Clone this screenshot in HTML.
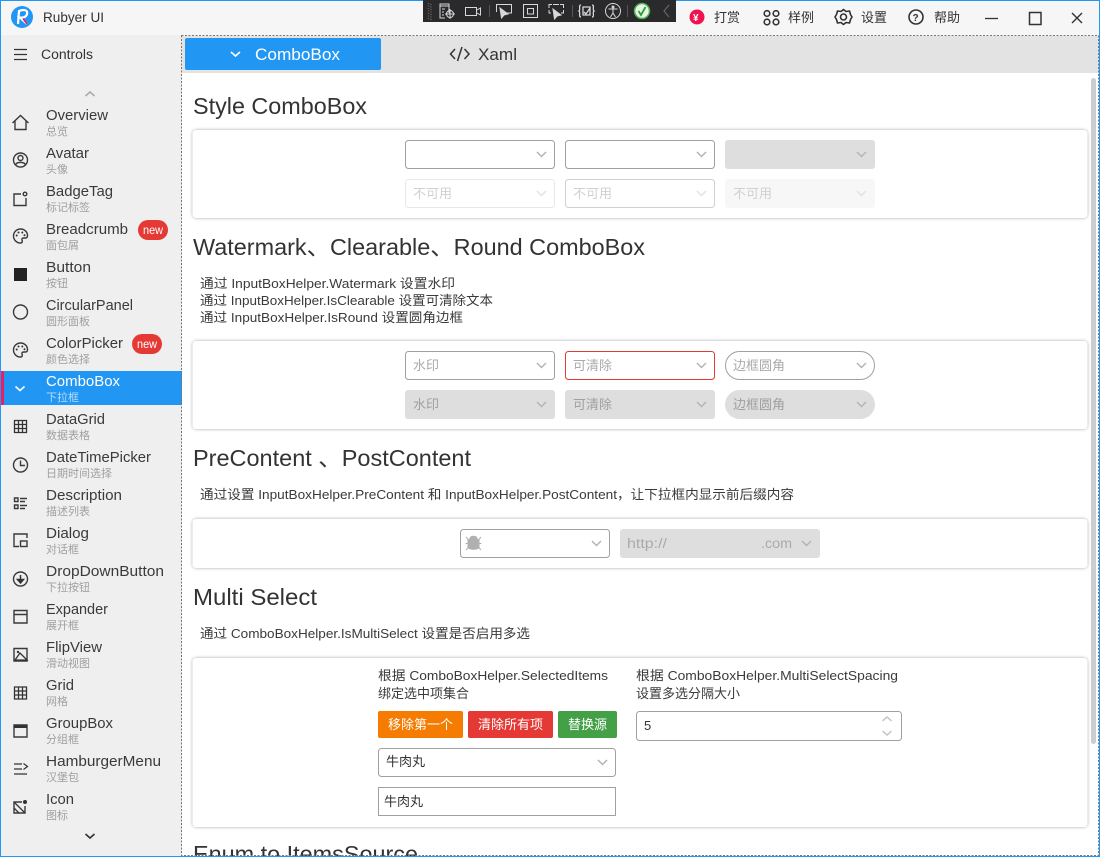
<!DOCTYPE html>
<html lang="zh">
<head>
<meta charset="utf-8">
<title>Rubyer UI</title>
<style>
html,body{margin:0;padding:0;background:#fff;width:1100px;height:857px;overflow:hidden}
svg{display:block}
text{font-family:"Liberation Sans","Noto Sans CJK SC",sans-serif;fill:#333}
.t{font-size:15px;fill:#3a3a3a}
.s{font-size:11px;fill:#a0a0a0}
.h{font-size:23px;fill:#333}
.d{font-size:13px;fill:#3a3a3a}
.p{font-size:13px;fill:#aaa}
.m{font-size:13px;fill:#333}
.i{fill:none;stroke:#3a3a3a;stroke-width:1.4}
</style>
</head>
<body>
<svg width="1100" height="857" viewBox="0 0 1100 857" xmlns="http://www.w3.org/2000/svg">
<defs>
<filter id="sh" x="-3%" y="-15%" width="106%" height="130%"><feDropShadow dx="0" dy="0" stdDeviation="1.5" flood-color="#000" flood-opacity=".35"/></filter>
<path id="chev" d="M-4.5 -2.5 L0 2 L4.5 -2.5" fill="none" stroke="#b4b4b4" stroke-width="1.5"/>
<path id="chevl" d="M-4.5 -2.5 L0 2 L4.5 -2.5" fill="none" stroke="#e2e2e2" stroke-width="1.5"/>
<g id="pal"><path d="M0 -7 A7 7 0 1 0 0 7 C2 7 2 5 1.5 4 C1 2.5 2 2 3.5 2 H5 C6.500 2 7 1 7 -.5 C7 -4 4 -7 0 -7Z" class="i"/><circle cx="-3.800" cy="-.5" r="1" fill="#333"/><circle cx="-2" cy="-3.500" r="1" fill="#333"/><circle cx="1.800" cy="-3.500" r="1" fill="#333"/><circle cx="4" cy="-.8" r="1" fill="#333"/></g>
<path id="grid" d="M0 0H12V12H0Z M0 4H12 M0 8H12 M4 0V12 M8 0V12" fill="none" stroke="#333" stroke-width="1.300"/>
</defs>

<!-- window -->
<rect width="1100" height="857" fill="#f6f6f6"/>
<rect x="1" y="35" width="181" height="821" fill="#efefef"/>
<rect x="182" y="36" width="917" height="820" fill="#fff"/>
<rect x="182" y="36" width="917" height="37" fill="#e3e3e3"/>

<!-- title bar left -->
<circle cx="22" cy="17" r="11" fill="#2196f3"/>
<path d="M18 24 L19 11 C24 9 28 10 27 14 C26.500 17 23 18 20 17.500 L27 24" fill="none" stroke="#fff" stroke-width="2.200"/>
<path d="M23 18.500 L27 24" stroke="#e91e63" stroke-width="1.500" fill="none"/>
<text x="43" y="22" font-size="14" textLength="61" lengthAdjust="spacingAndGlyphs">Rubyer UI</text>

<!-- dark toolbar -->
<rect x="423" y="0" width="253" height="22" fill="#2a2a2c"/>
<path d="M428.500 3V20 M431 4V20" stroke="#666" stroke-width="1.500" stroke-dasharray="1 1.500" fill="none"/>
<g fill="none" stroke="#d8d8d8" stroke-width="1">
<path d="M449 13V4H440V18H445 M440 6H449 M442 9H445 M442 12H444 M442 15H444"/>
<circle cx="450" cy="14" r="3.500"/><path d="M450 9V19 M445 14H455"/>
<rect x="465.500" y="7.500" width="11" height="8"/><path d="M477 10L480.500 8V15L477 13"/>
<path d="M489.500 5V17" stroke="#555"/>
<path d="M496.500 12V4.500H511.500V13H507"/>
<path d="M500 8L501.500 18L504 15L508 14Z" fill="#d8d8d8"/>
<rect x="523.500" y="4.500" width="14" height="13"/><rect x="527.500" y="8.500" width="6" height="5.500"/>
<path d="M549 8V4.500H552 M560 4.500H563.500V8 M549 10V13H551 M561 13H563.500V10 M553 4.500H559"/>
<path d="M553 9L554.500 19L557 16L561 15Z" fill="#d8d8d8"/>
<path d="M572.500 5V17" stroke="#555"/>
<path d="M581 5C578 5 581 10 579 11C581 12 578 17 581 17 M592 5C595 5 592 10 594 11C592 12 595 17 592 17" stroke-width="1.300"/>
<path d="M583 7H590V15H583Z M584 12L586 14L590 8" stroke-width="1.300"/>
<circle cx="613" cy="11" r="7.500"/>
<circle cx="613" cy="7" r="1" fill="#d8d8d8"/>
<path d="M608.500 9H617.500 M613 9V13 M613 13L610.500 17 M613 13L615.500 17"/>
<path d="M627.500 5V17" stroke="#555"/>
</g>
<circle cx="642" cy="11" r="7.500" fill="#e6f5e6" stroke="#4caf50" stroke-width="1.500"/>
<path d="M638.500 11L641 15L645.500 7" fill="none" stroke="#2e9e3a" stroke-width="1.800"/>
<path d="M669 5L664 11L669 17" fill="none" stroke="#666" stroke-width="1.200"/>

<!-- title bar right -->
<circle cx="697" cy="17" r="7.500" fill="#f0134f"/>
<text x="693" y="21" style="fill:#fff;font-weight:bold" font-size="10">¥</text>
<text x="714" y="22" font-size="13">打赏</text>
<g fill="none" stroke="#333" stroke-width="1.600">
<circle cx="767" cy="13.500" r="2.800"/><circle cx="776" cy="13.500" r="2.800"/><circle cx="767" cy="22" r="2.800"/><circle cx="776" cy="22" r="2.800"/>
<path d="M843.500 9.500L846 11.500L849.500 11L850.500 14.500L852 17L850.500 19.500L849.500 23L846 22.500L843.500 24.500L841 22.500L837.500 23L836.500 19.500L835 17L836.500 14.500L837.500 11L841 11.500Z" stroke-linejoin="round"/><circle cx="843.500" cy="17" r="3"/>
<circle cx="916" cy="17" r="7"/>
</g>
<text x="788" y="22" font-size="13">样例</text>
<text x="861" y="22" font-size="13">设置</text>
<text x="912.500" y="21" font-size="10" style="font-weight:bold">?</text>
<text x="934" y="22" font-size="13">帮助</text>
<path d="M985 18.500H998" stroke="#333" stroke-width="1.300"/>
<rect x="1029.500" y="12.500" width="11.500" height="12" fill="none" stroke="#333" stroke-width="1.500"/>
<path d="M1072 13L1082 23 M1082 13L1072 23" stroke="#333" stroke-width="1.400"/>

<!-- sidebar header -->
<path d="M14 49.500H27 M14 54.500H27 M14 59.500H27" stroke="#333" stroke-width="1.300"/>
<text x="41" y="59" font-size="13.500" textLength="52" lengthAdjust="spacingAndGlyphs">Controls</text>
<path d="M85.500 96L90 92L94.500 96" fill="none" stroke="#aaa" stroke-width="1.600"/>

<!-- selected -->
<rect x="1" y="371" width="181" height="34" fill="#2196f3"/>
<rect x="1" y="371" width="3" height="34" fill="#e91e63"/>

<!-- sidebar items -->
<text class="t" x="46" y="120" textLength="62" lengthAdjust="spacingAndGlyphs">Overview</text><text class="s" x="46" y="135">总览</text>
<text class="t" x="46" y="158" textLength="43" lengthAdjust="spacingAndGlyphs">Avatar</text><text class="s" x="46" y="173">头像</text>
<text class="t" x="46" y="196" textLength="67" lengthAdjust="spacingAndGlyphs">BadgeTag</text><text class="s" x="46" y="211">标记标签</text>
<text class="t" x="46" y="234" textLength="82" lengthAdjust="spacingAndGlyphs">Breadcrumb</text><text class="s" x="46" y="249">面包屑</text>
<text class="t" x="46" y="272" textLength="45" lengthAdjust="spacingAndGlyphs">Button</text><text class="s" x="46" y="287">按钮</text>
<text class="t" x="46" y="310" textLength="87" lengthAdjust="spacingAndGlyphs">CircularPanel</text><text class="s" x="46" y="325">圆形面板</text>
<text class="t" x="46" y="348" textLength="77" lengthAdjust="spacingAndGlyphs">ColorPicker</text><text class="s" x="46" y="363">颜色选择</text>
<text class="t" x="46" y="386" textLength="74" lengthAdjust="spacingAndGlyphs" style="fill:#fff">ComboBox</text><text class="s" x="46" y="401" style="fill:#b7dcfa">下拉框</text>
<text class="t" x="46" y="424" textLength="59" lengthAdjust="spacingAndGlyphs">DataGrid</text><text class="s" x="46" y="439">数据表格</text>
<text class="t" x="46" y="462" textLength="105" lengthAdjust="spacingAndGlyphs">DateTimePicker</text><text class="s" x="46" y="477">日期时间选择</text>
<text class="t" x="46" y="500" textLength="76" lengthAdjust="spacingAndGlyphs">Description</text><text class="s" x="46" y="515">描述列表</text>
<text class="t" x="46" y="538" textLength="43" lengthAdjust="spacingAndGlyphs">Dialog</text><text class="s" x="46" y="553">对话框</text>
<text class="t" x="46" y="576" textLength="118" lengthAdjust="spacingAndGlyphs">DropDownButton</text><text class="s" x="46" y="591">下拉按钮</text>
<text class="t" x="46" y="614" textLength="62" lengthAdjust="spacingAndGlyphs">Expander</text><text class="s" x="46" y="629">展开框</text>
<text class="t" x="46" y="652" textLength="56" lengthAdjust="spacingAndGlyphs">FlipView</text><text class="s" x="46" y="667">滑动视图</text>
<text class="t" x="46" y="690" textLength="28" lengthAdjust="spacingAndGlyphs">Grid</text><text class="s" x="46" y="705">网格</text>
<text class="t" x="46" y="728" textLength="67" lengthAdjust="spacingAndGlyphs">GroupBox</text><text class="s" x="46" y="743">分组框</text>
<text class="t" x="46" y="766" textLength="115" lengthAdjust="spacingAndGlyphs">HamburgerMenu</text><text class="s" x="46" y="781">汉堡包</text>
<text class="t" x="46" y="804" textLength="28" lengthAdjust="spacingAndGlyphs">Icon</text><text class="s" x="46" y="819">图标</text>

<!-- badges -->
<rect x="138" y="220" width="30" height="20" rx="10" fill="#e53935"/>
<text x="143" y="234" font-size="12" style="fill:#fff" textLength="20" lengthAdjust="spacingAndGlyphs">new</text>
<rect x="132" y="334" width="30" height="20" rx="10" fill="#e53935"/>
<text x="137" y="348" font-size="12" style="fill:#fff" textLength="20" lengthAdjust="spacingAndGlyphs">new</text>

<!-- sidebar icons -->
<path class="i" d="M12.500 123L20.500 115.500L28.500 123 M15 120.500V129.500H26V120.500"/>
<g class="i"><circle cx="20.500" cy="160" r="7"/><circle cx="20.500" cy="158" r="2.500"/><path d="M15.500 165C16.500 161.500 24.500 161.500 25.500 165"/></g>
<path class="i" d="M21 194H14V205.500H26V198"/><circle class="i" cx="25" cy="194" r="1.800"/>
<use href="#pal" x="20.500" y="236"/>
<rect x="14" y="268" width="13" height="13" fill="#222"/>
<circle class="i" cx="20.500" cy="312" r="7"/>
<use href="#pal" x="20.500" y="350"/>
<path d="M15.500 386.500L20 390.500L24.500 386.500" fill="none" stroke="#fff" stroke-width="1.600"/>
<use href="#grid" x="14.500" y="420.500"/>
<g class="i"><circle cx="20.500" cy="465" r="7"/><path d="M20.500 460.500V465.500H25"/></g>
<path class="i" d="M14.500 498H18V501.500H14.500Z M14.500 505H18V508.500H14.500Z M20 498.500H27 M20 501.500H25 M20 505.500H27 M20 508.500H25" stroke-width="1.300"/>
<path class="i" d="M27 538V534H14V546.500H19"/><rect class="i" x="20.500" y="541" width="6.500" height="5.500"/>
<g class="i"><circle cx="20.500" cy="579" r="7"/></g><path d="M20.500 575V580 M17.500 579.500L20.500 583L23.500 579.500Z" stroke="#333" stroke-width="1.500" fill="#333"/>
<path class="i" d="M14 610.500H27V623H14Z M14 614.500H27"/>
<path class="i" d="M14 648.500H27V661H14Z"/><path d="M15 660L20 653L27 660Z" fill="none" stroke="#333" stroke-width="1.300"/><circle cx="18" cy="652" r="1.200" fill="#333"/>
<use href="#grid" x="14.500" y="687"/>
<path class="i" d="M14 725H27V737H14Z"/><rect x="14" y="724.500" width="13" height="3.500" fill="#333"/>
<path d="M14 764H22 M14 769H22 M14 774H27 M23.500 763.500L27.500 766.500L23.500 769.500" fill="none" stroke="#333" stroke-width="1.200"/>
<path class="i" d="M22 802H14V813H25V806 M14 802L25 813 M14 808L19 813"/><circle cx="25" cy="802" r="2" fill="#333"/>
<path d="M85.500 834L90 838L94.500 834" fill="none" stroke="#333" stroke-width="1.600"/>

<!-- tabs -->
<rect x="185" y="38" width="196" height="32" rx="2" fill="#2196f3"/>
<path d="M231 52L235.500 56L240 52" fill="none" stroke="#fff" stroke-width="1.600"/>
<text x="255" y="60" font-size="17" style="fill:#fff" textLength="85" lengthAdjust="spacingAndGlyphs">ComboBox</text>
<path d="M455 49L450.500 54L455 59 M464.500 49L469 54L464.500 59 M462 47L457.500 61" fill="none" stroke="#333" stroke-width="1.500"/>
<text x="478" y="60" font-size="17" textLength="39" lengthAdjust="spacingAndGlyphs">Xaml</text>

<!-- scrollbar -->
<rect x="1091" y="78" width="5" height="666" rx="2.500" fill="#cdcdcd"/>

<!-- headings -->
<text class="h" x="193" y="114" textLength="174" lengthAdjust="spacingAndGlyphs">Style ComboBox</text>
<text class="h" x="193" y="255" textLength="452" lengthAdjust="spacingAndGlyphs">Watermark、Clearable、Round ComboBox</text>
<text class="h" x="193" y="466" textLength="278" lengthAdjust="spacingAndGlyphs">PreContent 、PostContent</text>
<text class="h" x="193" y="605" textLength="124" lengthAdjust="spacingAndGlyphs">Multi Select</text>
<text class="h" x="193" y="862" textLength="225" lengthAdjust="spacingAndGlyphs">Enum to ItemsSource</text>

<!-- descriptions -->
<text class="d" x="200" y="288" textLength="255" lengthAdjust="spacingAndGlyphs">通过 InputBoxHelper.Watermark 设置水印</text>
<text class="d" x="200" y="305" textLength="293" lengthAdjust="spacingAndGlyphs">通过 InputBoxHelper.IsClearable 设置可清除文本</text>
<text class="d" x="200" y="322" textLength="263" lengthAdjust="spacingAndGlyphs">通过 InputBoxHelper.IsRound 设置圆角边框</text>
<text class="d" x="200" y="499" textLength="594" lengthAdjust="spacingAndGlyphs">通过设置 InputBoxHelper.PreContent 和 InputBoxHelper.PostContent，让下拉框内显示前后缀内容</text>
<text class="d" x="200" y="638" textLength="330" lengthAdjust="spacingAndGlyphs">通过 ComboBoxHelper.IsMultiSelect 设置是否启用多选</text>

<!-- cards -->
<g fill="#fff" filter="url(#sh)">
<rect x="192.500" y="130" width="895" height="88" rx="4"/>
<rect x="192.500" y="341" width="895" height="88" rx="4"/>
<rect x="192.500" y="519" width="895" height="49" rx="4"/>
<rect x="192.500" y="658" width="895" height="169" rx="4"/>
</g>

<!-- card 1 -->
<rect x="405.500" y="140.500" width="149" height="28" rx="3" fill="#fff" stroke="#a0a0a0"/><use href="#chev" x="541.500" y="154.500"/>
<rect x="565.500" y="140.500" width="149" height="28" rx="3" fill="#fff" stroke="#a0a0a0"/><use href="#chev" x="701.500" y="154.500"/>
<rect x="725" y="140" width="150" height="29" rx="3" fill="#dedede"/><use href="#chev" x="861.500" y="154.500"/>
<rect x="405.500" y="179.500" width="149" height="28" rx="3" fill="#fff" stroke="#e8e8e8"/><use href="#chevl" x="541.500" y="193.500"/>
<rect x="565.500" y="179.500" width="149" height="28" rx="3" fill="#fff" stroke="#d0d0d0"/><use href="#chevl" x="701.500" y="193.500"/>
<rect x="725" y="179" width="150" height="29" rx="3" fill="#f7f7f7"/><use href="#chevl" x="861.500" y="193.500"/>
<text class="p" x="413" y="198" style="fill:#d0d0d0">不可用</text>
<text class="p" x="573" y="198" style="fill:#d0d0d0">不可用</text>
<text class="p" x="733" y="198" style="fill:#d0d0d0">不可用</text>

<!-- card 2 -->
<rect x="405.500" y="351.500" width="149" height="28" rx="3" fill="#fff" stroke="#a0a0a0"/><use href="#chev" x="541.500" y="365.500"/>
<rect x="565.500" y="351.500" width="149" height="28" rx="3" fill="#fff" stroke="#e53935"/><use href="#chev" x="701.500" y="365.500"/>
<rect x="725.500" y="351.500" width="149" height="28" rx="14" fill="#fff" stroke="#a0a0a0"/><use href="#chev" x="861.500" y="365.500"/>
<rect x="405" y="390" width="150" height="29" rx="3" fill="#dedede"/><use href="#chev" x="541.500" y="404.500"/>
<rect x="565" y="390" width="150" height="29" rx="3" fill="#dedede"/><use href="#chev" x="701.500" y="404.500"/>
<rect x="725" y="390" width="150" height="29" rx="14.500" fill="#dedede"/><use href="#chev" x="861.500" y="404.500"/>
<text class="p" x="413" y="370">水印</text>
<text class="p" x="573" y="370">可清除</text>
<text class="p" x="733" y="370">边框圆角</text>
<text class="p" x="413" y="409" style="fill:#a0a0a0">水印</text>
<text class="p" x="573" y="409" style="fill:#a0a0a0">可清除</text>
<text class="p" x="733" y="409" style="fill:#a0a0a0">边框圆角</text>

<!-- card 3 -->
<rect x="460.500" y="529.500" width="149" height="28" rx="3" fill="#fff" stroke="#a0a0a0"/><use href="#chev" x="596.500" y="543.500"/>
<path d="M470 538.500C470 535.500 477 535.500 477 538.500Z M468 539.500H479V547C479 550 468 550 468 547Z M466 537L468.500 540 M481 537L478.500 540 M465.500 543.500H481.500 M466 550L468.500 547 M481 550L478.500 547" fill="#b0b0b0" stroke="#b0b0b0" stroke-width="1"/>
<rect x="620" y="529" width="200" height="29" rx="3" fill="#dedede"/><use href="#chev" x="806.500" y="543.500"/>
<text x="627" y="548" font-size="13.500" style="fill:#aaa" textLength="40" lengthAdjust="spacingAndGlyphs">http://</text>
<text x="761" y="548" font-size="13.500" style="fill:#aaa" textLength="31" lengthAdjust="spacingAndGlyphs">.com</text>

<!-- card 4 -->
<text class="d" x="378" y="680" textLength="230" lengthAdjust="spacingAndGlyphs">根据 ComboBoxHelper.SelectedItems</text>
<text class="d" x="378" y="698">绑定选中项集合</text>
<text class="d" x="636" y="680" textLength="262" lengthAdjust="spacingAndGlyphs">根据 ComboBoxHelper.MultiSelectSpacing</text>
<text class="d" x="636" y="698">设置多选分隔大小</text>
<rect x="378" y="711" width="85" height="27" rx="2" fill="#f57c00"/>
<rect x="468" y="711" width="85" height="27" rx="2" fill="#e53935"/>
<rect x="558" y="711" width="59" height="27" rx="2" fill="#43a047"/>
<text x="388" y="729" font-size="13" style="fill:#fff">移除第一个</text>
<text x="478" y="729" font-size="13" style="fill:#fff">清除所有项</text>
<text x="568" y="729" font-size="13" style="fill:#fff">替换源</text>
<rect x="378.500" y="748.500" width="237" height="28" rx="3" fill="#fff" stroke="#a0a0a0"/><use href="#chev" x="602.500" y="762.500"/>
<text class="m" x="386" y="766">牛肉丸</text>
<rect x="378.500" y="787.500" width="237" height="28" fill="#fff" stroke="#a0a0a0"/>
<text class="m" x="384" y="806">牛肉丸</text>
<rect x="636.500" y="711.500" width="265" height="29" rx="3" fill="#fff" stroke="#a0a0a0"/>
<text class="m" x="644" y="730">5</text>
<path d="M882.500 721L887 717L891.500 721 M882.500 731L887 735L891.500 731" fill="none" stroke="#c4c4c4" stroke-width="1.500"/>

<!-- dashed outline and frame -->
<rect x="181.500" y="35.500" width="917" height="820" fill="none" stroke="#777" stroke-dasharray="2 1.500"/>
<rect x="0" y="856" width="1100" height="1" fill="#2196f3"/>
<rect x="0.500" y="0.500" width="1099" height="856" fill="none" stroke="#2196f3"/>
<rect x="423" y="0" width="253" height="1" fill="#2a2a2c"/>
</svg>
</body>
</html>
